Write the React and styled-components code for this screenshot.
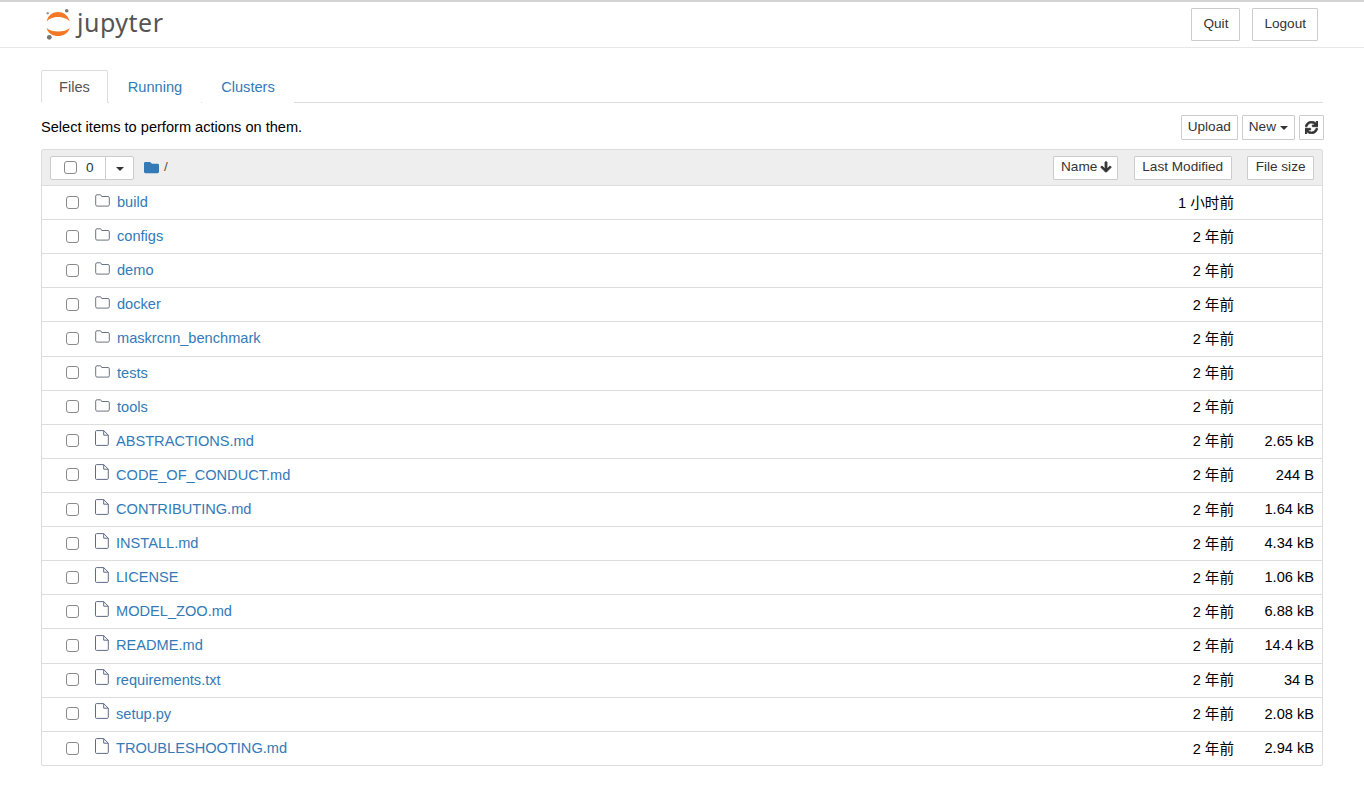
import React from "react";
import styled, { createGlobalStyle } from "styled-components";
import { FaArrowDown, FaFolder, FaSync } from "react-icons/fa";

const folders = [
  ["build", "1 小时前"],
  ["configs", "2 年前"],
  ["demo", "2 年前"],
  ["docker", "2 年前"],
  ["maskrcnn_benchmark", "2 年前"],
  ["tests", "2 年前"],
  ["tools", "2 年前"],
];

const files = [
  ["ABSTRACTIONS.md", "2.65 kB"],
  ["CODE_OF_CONDUCT.md", "244 B"],
  ["CONTRIBUTING.md", "1.64 kB"],
  ["INSTALL.md", "4.34 kB"],
  ["LICENSE", "1.06 kB"],
  ["MODEL_ZOO.md", "6.88 kB"],
  ["README.md", "14.4 kB"],
  ["requirements.txt", "34 B"],
  ["setup.py", "2.08 kB"],
  ["TROUBLESHOOTING.md", "2.94 kB"],
];

const FolderIcon = () => (
  <FolderSvg viewBox="0 0 15 13" fill="none" stroke="#6b7680" strokeWidth="1">
    <path d="M2 .8h3.2c.7 0 1 .3 1.2.9l.3.8h6.3c.8 0 1.3.5 1.3 1.3v7c0 .8-.5 1.3-1.3 1.3H2c-.8 0-1.3-.5-1.3-1.3V2.1C.7 1.3 1.2.8 2 .8z" />
  </FolderSvg>
);

const FileIcon = () => (
  <FileSvg viewBox="0 0 14 16" fill="none" stroke="#5f6b86" strokeWidth="1">
    <path d="M1.5.6h7.2l4.6 4.6v9.2c0 .6-.4 1-1 1H1.5c-.6 0-1-.4-1-1V1.6c0-.6.4-1 1-1z" />
    <path d="M8.7.6v4.6h4.6" />
  </FileSvg>
);

const LogoMark = () => (
  <LogoSvg viewBox="0 0 26 34">
    <path d="M1.7 15.5C4 2.8 22 2.8 24.7 15.5 20 9.5 6 9.5 1.7 15.5z" fill="#f37726" />
    <path d="M1.7 22C6 26.7 20 26.7 24.7 22 22 32.7 4 32.7 1.7 22z" fill="#f37726" />
    <circle cx="21.7" cy="4.7" r="1.8" fill="#767677" />
    <circle cx="2.7" cy="7.3" r="1.2" fill="#989798" />
    <circle cx="4.3" cy="31.3" r="2.4" fill="#767677" />
  </LogoSvg>
);

const App = () => (
  <Page>
    <GlobalStyle />
    <Header>
      <Logo>
        <LogoMark />
        <LogoText>jupyter</LogoText>
      </Logo>
      <HeaderActions>
        <HeaderButton>Quit</HeaderButton>
        <HeaderButton>Logout</HeaderButton>
      </HeaderActions>
    </Header>
    <Main>
      <Tabs>
        <Tab $active>Files</Tab>
        <Tab>Running</Tab>
        <Tab>Clusters</Tab>
      </Tabs>
      <Toolbar>
        <Hint>Select items to perform actions on them.</Hint>
        <ToolbarActions>
          <SmallButton>Upload</SmallButton>
          <SmallButton>
            New <Caret />
          </SmallButton>
          <RefreshButton>
            <FaSync size={13} color="#333" stroke="#333" strokeWidth={30} />
          </RefreshButton>
        </ToolbarActions>
      </Toolbar>
      <Panel>
        <PanelHeader>
          <SelectGroup>
            <SelectCount>
              <Checkbox />
              <span>0</span>
            </SelectCount>
            <SelectCaret>
              <Caret />
            </SelectCaret>
          </SelectGroup>
          <FaFolder size={15} color="#337ab7" />
          <Crumb>/</Crumb>
          <SortButtons>
            <NameButton>
              Name <FaArrowDown size={12} color="#333" stroke="#333" strokeWidth={40} />
            </NameButton>
            <SortButton>Last Modified</SortButton>
            <SortButton>File size</SortButton>
          </SortButtons>
        </PanelHeader>
        {folders.map(([name, time]) => (
          <Row key={name}>
            <Checkbox />
            <FolderIcon />
            <FileLink>{name}</FileLink>
            <Time>{time}</Time>
            <Size />
          </Row>
        ))}
        {files.map(([name, size]) => (
          <Row key={name}>
            <Checkbox />
            <FileIcon />
            <FileLink>{name}</FileLink>
            <Time>2 年前</Time>
            <Size>{size}</Size>
          </Row>
        ))}
      </Panel>
    </Main>
  </Page>
);

const GlobalStyle = createGlobalStyle`
  body {
    margin: 0;
    background: #fff;
    color: #000;
    font-family: "Liberation Sans", "Noto Sans CJK SC", sans-serif;
    font-size: 14.6px;
  }
`;

const Page = styled.div`
  width: 1364px;
  height: 792px;
  overflow: hidden;
  box-sizing: border-box;
  border-top: 2px solid #d4d4d4;
`;

const Header = styled.header`
  height: 45px;
  box-sizing: content-box;
  border-bottom: 1px solid #e7e7e7;
  display: flex;
  align-items: flex-start;
  justify-content: space-between;
  padding: 0 46px 0 45px;
`;

const Logo = styled.div`
  display: flex;
  align-items: flex-start;
  gap: 6px;
`;

const LogoSvg = styled.svg`
  width: 26px;
  height: 34px;
  margin-top: 4px;
`;

const LogoText = styled.span`
  font-family: "Noto Sans", sans-serif;
  font-size: 25px;
  line-height: 40px;
  color: #555;
  letter-spacing: 0.5px;
`;

const HeaderActions = styled.div`
  display: flex;
  gap: 12px;
  padding-top: 6px;
`;

const HeaderButton = styled.button`
  height: 33px;
  padding: 0 11px 3px;
  background: #fff;
  border: 1px solid #ccc;
  border-radius: 1px;
  color: #333;
  font: inherit;
  font-size: 13.6px;
`;

const Main = styled.main`
  width: 1282px;
  margin-left: 41px;
  padding-top: 22px;
`;

const Tabs = styled.nav`
  display: flex;
  height: 33px;
  box-sizing: border-box;
  border-bottom: 1px solid #ddd;
`;

const Tab = styled.a`
  box-sizing: border-box;
  height: 33px;
  line-height: 33px;
  padding: 0 ${(p) => (p.$active ? "17px" : "18px")};
  margin-left: ${(p) => (p.$active ? "0" : "1px")};
  color: ${(p) => (p.$active ? "#555" : "#337ab7")};
  background: #fff;
  border: 1px solid ${(p) => (p.$active ? "#ddd" : "transparent")};
  border-bottom-color: ${(p) => (p.$active ? "#fff" : "transparent")};
  border-radius: 2px 2px 0 0;
`;

const Toolbar = styled.div`
  display: flex;
  justify-content: space-between;
  align-items: center;
  height: 25px;
  margin-top: 12px;
`;

const Hint = styled.span`
  color: #000;
  margin-top: -1px;
`;

const ToolbarActions = styled.div`
  display: flex;
  gap: 4px;
  margin-right: -1px;
`;

const SmallButton = styled.button`
  display: flex;
  align-items: center;
  gap: 4px;
  height: 25px;
  padding: 0 6px 2px;
  background: #fff;
  border: 1px solid #ccc;
  border-radius: 1px;
  color: #333;
  font: inherit;
  font-size: 13.6px;
`;

const RefreshButton = styled(SmallButton)`
  width: 25px;
  justify-content: center;
  padding: 0;
`;

const Caret = styled.i`
  display: inline-block;
  margin-top: 2px;
  border-top: 4px solid #333;
  border-left: 4px solid transparent;
  border-right: 4px solid transparent;
`;

const Panel = styled.section`
  margin-top: 9px;
  border: 1px solid #ddd;
  border-radius: 2px;
  box-sizing: border-box;
  height: 617px;
`;

const PanelHeader = styled.div`
  display: flex;
  align-items: center;
  height: 35px;
  padding: 0 8px;
  background: #eee;
  border-bottom: 1px solid #ddd;
  box-sizing: content-box;
  font-size: 13.6px;
`;

const SelectGroup = styled.div`
  display: flex;
  width: 84px;
  height: 24px;
  box-sizing: border-box;
  margin-right: 10px;
  background: #fff;
  border: 1px solid #ccc;
  border-radius: 2px;
`;

const SelectCount = styled.div`
  display: flex;
  align-items: center;
  gap: 9px;
  width: 55px;
  padding: 0 0 1px 13px;
  box-sizing: border-box;
  border-right: 1px solid #ccc;
  color: #333;
`;

const SelectCaret = styled.div`
  flex: 1;
  display: flex;
  align-items: center;
  justify-content: center;
`;

const Crumb = styled.span`
  margin: -2px 0 0 5px;
  color: #555;
`;

const SortButtons = styled.div`
  margin-left: auto;
  display: flex;
  gap: 15.5px;
`;

const SortButton = styled.button`
  display: flex;
  align-items: center;
  gap: 4px;
  height: 24px;
  padding: 0 7.5px 2px;
  background: #fff;
  border: 1px solid #ccc;
  border-radius: 1px;
  color: #333;
  font: inherit;
`;

const NameButton = styled(SortButton)`
  gap: 3px;
  padding: 0 5px 2px 7px;
`;

const Checkbox = styled.span`
  flex: none;
  display: inline-block;
  width: 13px;
  height: 13px;
  box-sizing: border-box;
  border: 1.5px solid #8a8a8a;
  border-radius: 3px;
  background: #fff;
`;

const Row = styled.div`
  display: flex;
  align-items: center;
  height: 34.12px;
  box-sizing: border-box;
  padding: 0 8px 1px 24px;
  border-bottom: 1px solid #ddd;

  &:last-child {
    border-bottom: none;
  }
`;

const FolderSvg = styled.svg`
  flex: none;
  width: 15px;
  height: 13px;
  margin: -3px 0 0 16px;
`;

const FileSvg = styled.svg`
  flex: none;
  width: 14px;
  height: 16px;
  margin: -5px 0 0 16px;
`;

const FileLink = styled.a`
  margin-left: 7px;
  color: #337ab7;
`;

const Time = styled.span`
  margin: -2px 0 0 auto;
`;

const Size = styled.span`
  width: 80px;
  text-align: right;
`;

export default App;
